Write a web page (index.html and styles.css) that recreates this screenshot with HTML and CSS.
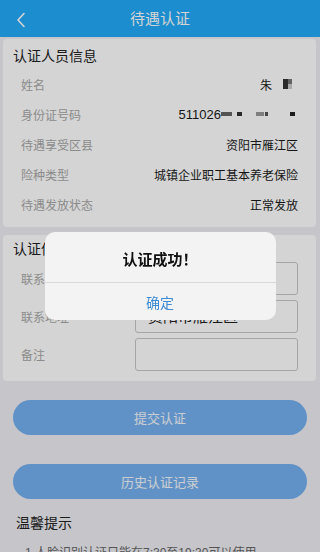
FILE: index.html
```html
<!DOCTYPE html>
<html lang="zh-CN">
<head>
<meta charset="utf-8">
<title>待遇认证</title>
<link rel="stylesheet" href="styles.css">
</head>
<body>
<header class="topbar">
  <svg class="back" width="10" height="16" viewBox="0 0 10 16"><path d="M8 1.5 L2 8 L8 14.5" fill="none" stroke="#fff" stroke-width="1.6" stroke-linecap="round" stroke-linejoin="round"/></svg>
  <h1 class="title">待遇认证</h1>
</header>
<main class="page">
  <section class="card info">
    <h2 class="card-title">认证人员信息</h2>
    <div class="row"><span class="label">姓名</span><span class="value">朱<span class="mosaic name-mosaic"><i class="m1"></i><i class="m2"></i></span></span></div>
    <div class="row"><span class="label">身份证号码</span><span class="value"><span class="digits">511026</span><span class="mosaic id-mosaic"><i class="b1"></i><i class="b2"></i><i class="b3"></i><i class="b4"></i><i class="b5"></i></span></span></div>
    <div class="row"><span class="label">待遇享受区县</span><span class="value">资阳市雁江区</span></div>
    <div class="row"><span class="label">险种类型</span><span class="value">城镇企业职工基本养老保险</span></div>
    <div class="row"><span class="label">待遇发放状态</span><span class="value">正常发放</span></div>
  </section>
  <section class="card form">
    <h2 class="card-title">认证信息</h2>
    <div class="frow"><span class="label">联系电话</span><div class="box"></div></div>
    <div class="frow"><span class="label">联系地址</span><div class="box">资阳市雁江区</div></div>
    <div class="frow"><span class="label">备注</span><div class="box"></div></div>
  </section>
  <div class="actions">
    <button class="btn">提交认证</button>
    <button class="btn">历史认证记录</button>
  </div>
  <section class="tips">
    <h3 class="tips-title">温馨提示</h3>
    <p class="tip">1.人脸识别认证只能在7:30至19:30可以使用</p>
  </section>
</main>
<div class="overlay">
  <div class="dialog">
    <div class="dialog-msg">认证成功！</div>
    <div class="dialog-btn">确定</div>
  </div>
</div>
</body>
</html>
```
FILE: styles.css
```css
* { box-sizing: border-box; }
html, body { margin: 0; padding: 0; }
body {
  width: 320px;
  height: 552px;
  overflow: hidden;
  background: #eeeef3;
  font-family: "Liberation Sans", "Noto Sans CJK SC", sans-serif;
  color: #222;
}
.topbar {
  height: 37px;
  background: #22aaf8;
  display: flex;
  align-items: center;
  justify-content: center;
  position: relative;
}
.back {
  position: absolute;
  left: 16px;
  top: 12px;
}
.title {
  margin: 0;
  font-size: 15px;
  font-weight: normal;
  color: #fff;
  line-height: 20px;
}
.page {
  padding: 2px 4px 0 3px;
}
.card {
  background: #fff;
  border-radius: 4px;
}
.card-title {
  margin: 0;
  font-size: 14px;
  font-weight: normal;
  line-height: 26px;
  padding-left: 10px;
  color: #222;
}
.info {
  padding: 4px 18px 8px 0;
}
.row {
  height: 30px;
  display: flex;
  align-items: center;
  justify-content: space-between;
  padding-left: 18px;
}
.label {
  font-size: 12px;
  color: #a8a8a8;
}
.value {
  font-size: 12px;
  color: #1a1a1a;
  display: flex;
  align-items: center;
}
.digits { font-size: 13px; }
.mosaic { display: inline-flex; align-items: center; }
.name-mosaic { margin-left: 11px; margin-right: 6px; }
.name-mosaic i { display: block; height: 10px; }
.name-mosaic .m1 { width: 5px; background: #333; }
.name-mosaic .m2 { width: 4px; background: linear-gradient(#777 0 50%, #ccc 50% 100%); }
.id-mosaic { margin-right: 3px; }
.id-mosaic i { display: block; height: 4px; }
.id-mosaic .b1 { width: 11px; background: #666; }
.id-mosaic .b2 { width: 5px; background: #333; margin-left: 5px; }
.id-mosaic .b3 { width: 8px; background: #999; margin-left: 14px; }
.id-mosaic .b4 { width: 3px; background: #555; margin-left: 1px; }
.id-mosaic .b5 { width: 5px; background: #222; margin-left: 22px; }
.form {
  margin-top: 8px;
  padding: 1px 18px 10px 0;
  display: flex;
  flex-direction: column;
}
.frow {
  display: grid;
  grid-template-columns: 114px 1fr;
  align-items: center;
  padding-left: 18px;
  margin-bottom: 5px;
}
.frow:last-child { margin-bottom: 0; }
.box {
  height: 33px;
  border: 1px solid #c8c8c8;
  border-radius: 3px;
  background: #fff;
  font-size: 15px;
  line-height: 31px;
  padding-left: 12px;
  color: #222;
}
.actions {
  padding: 19px 9px 0 10px;
  display: flex;
  flex-direction: column;
  gap: 29px;
}
.btn {
  height: 35px;
  border: none;
  border-radius: 18px;
  background: #75b0f0;
  color: #f4f8fc;
  font-family: "Liberation Sans", "Noto Sans CJK SC", sans-serif;
  font-size: 13px;
}
.tips {
  padding: 14px 0 0 13px;
}
.tips-title {
  margin: 0;
  font-size: 14px;
  font-weight: normal;
  line-height: 20px;
  color: #222;
}
.tip {
  margin: 10px 0 0 9px;
  font-size: 12px;
  line-height: 20px;
  color: #666;
}
.overlay {
  position: fixed;
  inset: 0;
  background: rgba(0, 0, 0, 0.17);
  display: flex;
  align-items: center;
  justify-content: center;
}
.dialog {
  width: 231px;
  background: #f3f3f3;
  border-radius: 10px;
  overflow: hidden;
}
.dialog-msg {
  height: 51px;
  display: flex;
  align-items: center;
  justify-content: center;
  font-size: 15px;
  font-weight: bold;
  color: #111;
  padding-top: 2px;
  border-bottom: 1px solid #d8d8d8;
}
.dialog-btn {
  height: 37px;
  display: flex;
  align-items: center;
  justify-content: center;
  font-size: 14px;
  color: #3d8bd4;
}
```
